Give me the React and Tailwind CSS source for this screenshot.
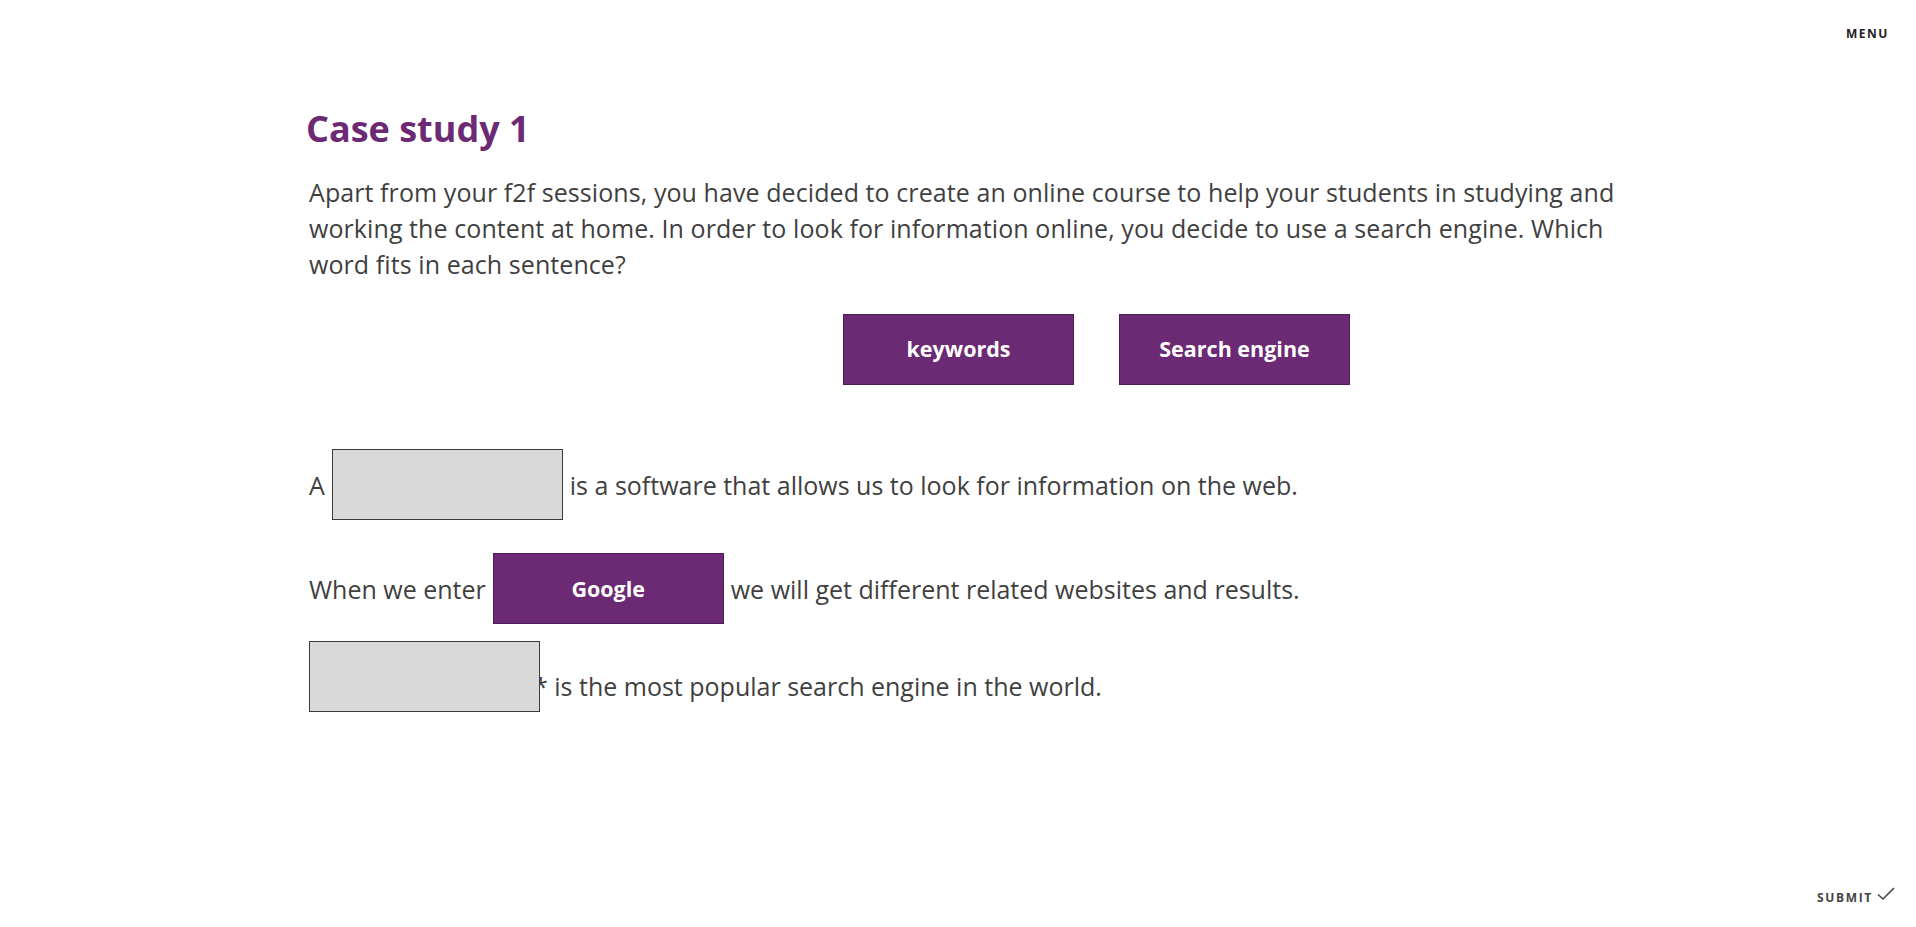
import { useState } from "react";

const purple = "bg-[#6b2a73]";

function Chip({ children }) {
  return (
    <div
      className={`flex h-[71px] w-[231px] items-center justify-center border border-[#4e1c57] ${purple} text-[21.5px] font-bold text-white`}>
      {children}
    </div>
  );
}

function Slot({ filled, className = "" }) {
  if (filled) {
    return (
      <div className={`relative z-10 ${className}`}>
        <Chip>{filled}</Chip>
      </div>
    );
  }
  return (
    <div
      className={`relative z-10 h-[71px] w-[231px] border border-[#3a3a3a] bg-[#d9d9d9] ${className}`}
    />
  );
}

export default function App() {
  const [words] = useState(["keywords", "Search engine"]);

  return (
    <div
      className="flex h-[927px] flex-col bg-white text-[#3f3f3f]"
      style={{ fontFamily: '"Open Sans", "Liberation Sans", sans-serif' }}>
      {/* top bar */}
      <header className="flex justify-end pr-[27px] pt-[27px]">
        <span className="text-[12px] font-bold leading-[14px] tracking-[0.13em] text-[#222]">
          MENU
        </span>
      </header>

      <main className="ml-[303px] flex-1">
        <h1 className="mt-[66px] pl-[3px] text-[36px] font-bold leading-[43px] text-[#6b2a73]">
          Case study 1
        </h1>

        <p className="mt-[24px] w-[1325px] pl-[6px] text-[25px] leading-[36px] tracking-[0.08px]">
          Apart from your f2f sessions, you have decided to create an online
          course to help your students in studying and working the content at
          home. In order to look for information online, you decide to use a
          search engine. Which word fits in each sentence?
        </p>

        {/* word bank */}
        <div className="ml-[540px] mt-[32px] flex gap-[45px]">
          {words.map((w) => (
            <Chip key={w}>{w}</Chip>
          ))}
        </div>

        {/* sentences */}
        <div className="mt-[64px] pl-[6px] text-[25px] leading-[36px]">
          <div className="flex items-center">
            <span>A</span>
            <Slot className="mx-[7px]" />
            <span>
              is a software that allows us to look for information on the web.
            </span>
          </div>

          <div className="mt-[33px] flex items-center">
            <span>When we enter</span>
            <Slot filled="Google" className="mx-[7px]" />
            <span>we will get different related websites and results.</span>
          </div>

          <div className="mt-[17px] flex items-end">
            <Slot />
            <span className="mb-[8px] ml-[-6px]">
              * is the most popular search engine in the world.
            </span>
          </div>
        </div>
      </main>

      {/* bottom bar */}
      <footer className="flex items-center justify-end gap-[4px] pb-[18px] pr-[21px]">
        <span className="text-[12px] font-bold leading-[14px] tracking-[0.14em] text-[#444]">
          SUBMIT
        </span>
        <svg
          width="18"
          height="14"
          viewBox="0 0 18 14"
          fill="none"
          stroke="#444"
          strokeWidth="1.6"
          className="mb-[8px]">
          <path d="M1 7.5 L6 12 L17 1" />
        </svg>
      </footer>
    </div>
  );
}
